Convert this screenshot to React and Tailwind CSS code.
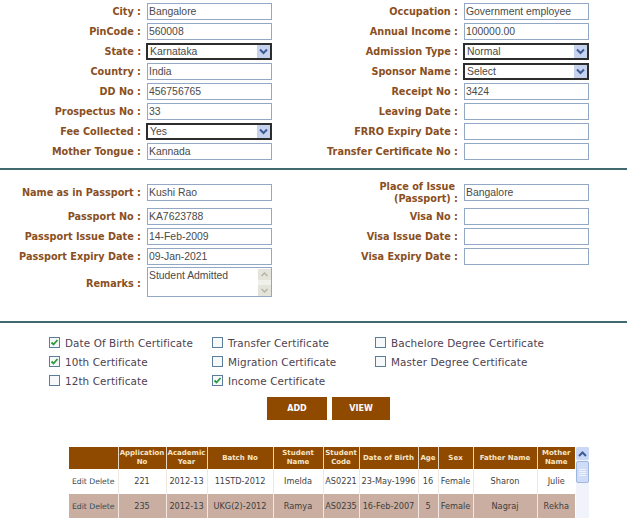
const inputText = "font-['Liberation_Sans',sans-serif] text-[10.4px] text-[#4a4a4a]";

function Label({ children, className = "" }) {
  return (
    <div className={`w-[141px] shrink-0 whitespace-nowrap text-right font-['DejaVu_Sans',sans-serif] text-[9.7px] font-bold leading-[12px] text-[#8a4f22] ${className}`}>
      <div className="flex flex-col items-end">{children}</div>
    </div>
  );
}

function TextBox({ value }) {
  return (
    <div className={`ml-[6px] flex h-[17px] w-[125px] shrink-0 items-center border border-[#92a8c4] bg-white pl-[1px] ${inputText}`}>
      {value}
    </div>
  );
}

function SelectBox({ value }) {
  return (
    <div className={`ml-[5px] flex h-[17px] w-[126px] shrink-0 items-center justify-between border-2 border-[#2d2d2d] bg-white pl-[2px] ${inputText}`}>
      <span>{value}</span>
      <span className="flex h-[13px] w-[13px] items-center justify-center bg-[#c6d3ef]">
        <svg width="9" height="7" viewBox="0 0 9 7">
          <path d="M1 1.5 L4.5 5 L8 1.5" fill="none" stroke="#3f5a94" strokeWidth="2" />
        </svg>
      </span>
    </div>
  );
}

function Field({ label, value, select, width }) {
  return (
    <div className={`flex shrink-0 items-center ${width}`}>
      <Label>{label}</Label>
      {select ? <SelectBox value={value} /> : <TextBox value={value} />}
    </div>
  );
}

function Row({ left, right }) {
  return (
    <div className="flex h-[17px] items-center">
      <Field {...left} width="w-[317px]" />
      <Field {...right} width="w-[310px]" />
    </div>
  );
}

function Check({ label, checked }) {
  return (
    <div className="flex h-[13px] items-center">
      <span className="relative -top-[1px] ml-[1px] flex h-[11px] w-[11px] shrink-0 items-center justify-center border border-[#5b7d9c] bg-[#f6f8fa]">
        {checked && (
          <svg width="9" height="9" viewBox="0 0 9 9">
            <path d="M1.5 4.5 L3.5 6.5 L7.5 2" fill="none" stroke="#2f9a3a" strokeWidth="1.8" />
          </svg>
        )}
      </span>
      <span className="ml-[5px] whitespace-nowrap font-['DejaVu_Sans',sans-serif] text-[10.4px] leading-[13px] tracking-[0.1px] text-[#4d4250]">{label}</span>
    </div>
  );
}

const columns = [
  { head: "", w: "w-[49px]" },
  { head: "Application No", w: "w-[48px]" },
  { head: "Academic Year", w: "w-[41px]" },
  { head: "Batch No", w: "w-[66px]" },
  { head: "Student Name", w: "w-[50px]" },
  { head: "Student Code", w: "w-[36px]" },
  { head: "Date of Birth", w: "w-[59px]" },
  { head: "Age", w: "w-[20px]" },
  { head: "Sex", w: "w-[35px]" },
  { head: "Father Name", w: "w-[64px]" },
  { head: "Mother Name", w: "w-[38px]" },
];

const rows = [
  ["Edit Delete", "221", "2012-13", "11STD-2012", "Imelda", "AS0221", "23-May-1996", "16", "Female", "Sharon", "Julie"],
  ["Edit Delete", "235", "2012-13", "UKG(2)-2012", "Ramya", "AS0235", "16-Feb-2007", "5", "Female", "Nagraj", "Rekha"],
];

export default function App() {
  return (
    <div className="h-[518px] w-[627px] overflow-hidden bg-white">
      <div className="flex flex-col gap-[3px] pt-[3px]">
        <Row left={{ label: "City :", value: "Bangalore" }} right={{ label: "Occupation :", value: "Government employee" }} />
        <Row left={{ label: "PinCode :", value: "560008" }} right={{ label: "Annual Income :", value: "100000.00" }} />
        <Row left={{ label: "State :", value: "Karnataka", select: true }} right={{ label: "Admission Type :", value: "Normal", select: true }} />
        <Row left={{ label: "Country :", value: "India" }} right={{ label: "Sponsor Name :", value: "Select", select: true }} />
        <Row left={{ label: "DD No :", value: "456756765" }} right={{ label: "Receipt No :", value: "3424" }} />
        <Row left={{ label: "Prospectus No :", value: "33" }} right={{ label: "Leaving Date :", value: "" }} />
        <Row left={{ label: "Fee Collected :", value: "Yes", select: true }} right={{ label: "FRRO Expiry Date :", value: "" }} />
        <Row left={{ label: "Mother Tongue :", value: "Kannada" }} right={{ label: "Transfer Certificate No :", value: "" }} />
      </div>

      <div className="mt-[8px] h-[2px] bg-[#3f6b6e]" />

      <div className="flex flex-col pt-[14px]">
        <Row
          left={{ label: "Name as in Passport :", value: "Kushi Rao" }}
          right={{ label: <><span className="pr-[3px]">Place of Issue</span><span>(Passport) :</span></>, value: "Bangalore" }}
        />
        <div className="mt-[7px] flex flex-col gap-[3px]">
          <Row left={{ label: "Passport No :", value: "KA7623788" }} right={{ label: "Visa No :", value: "" }} />
          <Row left={{ label: "Passport Issue Date :", value: "14-Feb-2009" }} right={{ label: "Visa Issue Date :", value: "" }} />
          <Row left={{ label: "Passport Expiry Date :", value: "09-Jan-2021" }} right={{ label: "Visa Expiry Date :", value: "" }} />
        </div>
        <div className="mt-[2px] flex items-center">
          <Label className="pt-[3px]">Remarks :</Label>
          <div className={`ml-[6px] flex h-[30px] w-[125px] justify-between border border-[#92a8c4] bg-white pl-[1px] pt-[1px] ${inputText}`}>
            <span className="leading-[14px]">Student Admitted</span>
            <span className="flex w-[13px] flex-col justify-between bg-[#f1f1ec]">
              <span className="flex h-[11px] items-center justify-center bg-[#e4e4da]">
                <svg width="7" height="5" viewBox="0 0 7 5"><path d="M0.5 4 L3.5 1 L6.5 4" fill="none" stroke="#b5b5a8" strokeWidth="1.5" /></svg>
              </span>
              <span className="flex h-[11px] items-center justify-center bg-[#e4e4da]">
                <svg width="7" height="5" viewBox="0 0 7 5"><path d="M0.5 1 L3.5 4 L6.5 1" fill="none" stroke="#b5b5a8" strokeWidth="1.5" /></svg>
              </span>
            </span>
          </div>
        </div>
      </div>

      <div className="mt-[24px] h-[2px] bg-[#3f6b6e]" />

      <div className="flex pl-[48px] pt-[14px]">
        <div className="flex w-[163px] flex-col gap-[6px]">
          <Check checked label="Date Of Birth Certificate" />
          <Check checked label="10th Certificate" />
          <Check label="12th Certificate" />
        </div>
        <div className="flex w-[163px] flex-col gap-[6px]">
          <Check label="Transfer Certificate" />
          <Check label="Migration Certificate" />
          <Check checked label="Income Certificate" />
        </div>
        <div className="flex flex-col gap-[6px]">
          <Check label="Bachelore Degree Certificate" />
          <Check label="Master Degree Certificate" />
        </div>
      </div>

      <div className="mt-[9px] flex gap-[5px] pl-[267px] font-['DejaVu_Sans',sans-serif] text-[8px] font-bold text-white">
        <div className="flex h-[23px] w-[60px] items-center justify-center bg-[#8f4a00]">ADD</div>
        <div className="flex h-[23px] w-[58px] items-center justify-center bg-[#8f4a00]">VIEW</div>
      </div>

      <div className="mt-[27px] flex pl-[69px]">
        <div className="w-[506px]">
          <table className="w-[506px] table-fixed border-collapse font-['DejaVu_Sans',sans-serif]">
            <thead>
              <tr className="h-[22px] bg-[#8f4a00] text-center text-[7px] font-bold leading-[9px] text-[#f7e6c8]">
                {columns.map((c, i) => (
                  <th key={i} className={`${c.w} border-r border-[#e9d6bf] p-0 last:border-r-0`}>{c.head}</th>
                ))}
              </tr>
            </thead>
            <tbody>
              {rows.map((r, i) => (
                <tr key={i} className={`h-[25px] text-center text-[8.2px] text-[#3f3f3f] ${i === 1 ? "bg-[#c9aea1]" : "bg-white"}`}>
                  {r.map((cell, j) => (
                    <td key={j} className={`whitespace-nowrap border-r border-[#f1e8e2] p-0 last:border-r-0 ${j === 0 ? "text-[7.7px] text-[#33505a]" : ""}`}>{cell}</td>
                  ))}
                </tr>
              ))}
            </tbody>
          </table>
        </div>
        <div className="ml-[1px] flex h-[71px] w-[13px] flex-col bg-[#f0f3fa]">
          <div className="flex h-[13px] items-center justify-center rounded-[2px] bg-[#c8d8f6]">
            <svg width="9" height="6" viewBox="0 0 9 6"><path d="M1 5 L4.5 1.5 L8 5" fill="none" stroke="#3f5a94" strokeWidth="2" /></svg>
          </div>
          <div className="mt-[1px] flex h-[22px] flex-col items-center justify-center gap-[1px] rounded-[2px] border border-[#9fb6e0] bg-[#cfdcf8]">
            <span className="h-px w-[7px] bg-[#eef3fd]" />
            <span className="h-px w-[7px] bg-[#eef3fd]" />
            <span className="h-px w-[7px] bg-[#eef3fd]" />
            <span className="h-px w-[7px] bg-[#eef3fd]" />
          </div>
        </div>
      </div>
    </div>
  );
}
